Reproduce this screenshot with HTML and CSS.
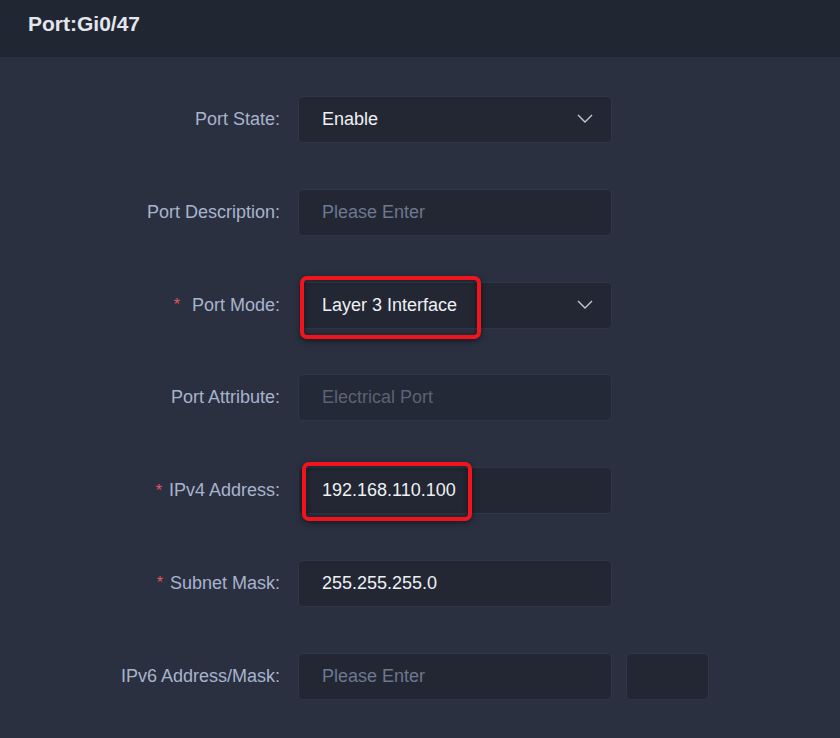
FILE: index.html
```html
<!DOCTYPE html>
<html lang="en">
<head>
  <meta charset="UTF-8">
  <meta name="viewport" content="width=device-width, initial-scale=1">
  <title>Port:Gi0/47</title>
  <link rel="stylesheet" href="styles.css">
</head>
<body>
  <div class="panel-header">Port:Gi0/47</div>

  <div class="port-form">
    <label class="form-label">Port State:</label>
    <div class="form-field">
      <div class="select-box">
        <span class="value">Enable</span>
        <svg class="arrow" width="16" height="9" viewBox="0 0 16 9"><path d="M1 1l7 7 7-7" fill="none" stroke="#c3c8d3" stroke-width="1.4"/></svg>
      </div>
    </div>

    <label class="form-label">Port Description:</label>
    <div class="form-field">
      <div class="text-box"><span class="placeholder">Please Enter</span></div>
    </div>

    <label class="form-label"><span class="required wide">*</span>Port Mode:</label>
    <div class="form-field">
      <div class="select-box">
        <span class="value">Layer 3 Interface</span>
        <svg class="arrow" width="16" height="9" viewBox="0 0 16 9"><path d="M1 1l7 7 7-7" fill="none" stroke="#c3c8d3" stroke-width="1.4"/></svg>
      </div>
      <div class="mark mark-mode"></div>
    </div>

    <label class="form-label">Port Attribute:</label>
    <div class="form-field">
      <div class="text-box disabled"><span class="muted">Electrical Port</span></div>
    </div>

    <label class="form-label"><span class="required">*</span>IPv4 Address:</label>
    <div class="form-field">
      <div class="text-box"><span class="value">192.168.110.100</span></div>
      <div class="mark mark-ip"></div>
    </div>

    <label class="form-label"><span class="required">*</span>Subnet Mask:</label>
    <div class="form-field">
      <div class="text-box"><span class="value">255.255.255.0</span></div>
    </div>

    <label class="form-label">IPv6 Address/Mask:</label>
    <div class="form-field split">
      <div class="text-box"><span class="placeholder">Please Enter</span></div>
      <div class="text-box mask-box"></div>
    </div>
  </div>
</body>
</html>
```

FILE: styles.css
```css
body {
  margin: 0;
  background: #2b3041;
  font-family: 'Liberation Sans', Arial, sans-serif;
  min-height: 738px;
}

.panel-header {
  height: 57px;
  box-sizing: border-box;
  padding: 12px 0 0 28px;
  background: #212633;
  color: #e3e6ec;
  font-size: 21px;
  font-weight: bold;
  line-height: 24px;
}

.port-form {
  display: grid;
  grid-template-columns: 280px 314px;
  column-gap: 18px;
  row-gap: 45.8px;
  padding-top: 39px;
}

.form-label {
  display: flex;
  align-items: center;
  justify-content: flex-end;
  height: 47px;
  color: #a8b3cc;
  font-size: 18px;
}

.required {
  color: #e0585c;
  font-size: 16px;
  margin-right: 7px;
}

.required.wide {
  margin-right: 12px;
}

.form-field {
  position: relative;
  width: 314px;
}

.form-field.split {
  display: flex;
  gap: 14px;
}

.form-field.split .text-box {
  width: 314px;
  flex: none;
}

.form-field.split .mask-box {
  width: 83px;
}

.select-box,
.text-box {
  height: 47px;
  box-sizing: border-box;
  display: flex;
  align-items: center;
  justify-content: space-between;
  padding: 0 18px 0 23px;
  background: #222733;
  border: 1px solid #30364a;
  border-radius: 5px;
  font-size: 18px;
}

.text-box.disabled {
  background: #242937;
}

.value {
  color: #eef0f4;
}

.placeholder {
  color: #6e7890;
}

.muted {
  color: #5b6374;
}

.arrow {
  display: block;
  margin-top: -2px;
}

/* red outline around the highlighted values */
.mark {
  position: absolute;
  border: 4px solid #f0141c;
  border-radius: 7px;
  box-sizing: border-box;
  box-shadow: 0 2px 6px rgba(0, 0, 0, 0.5), inset 0 0 6px rgba(0, 0, 0, 0.45);
}

.mark-mode {
  left: 2px;
  top: -6px;
  width: 181px;
  height: 63px;
}

.mark-ip {
  left: 4px;
  top: -5px;
  width: 170px;
  height: 59px;
}
```
